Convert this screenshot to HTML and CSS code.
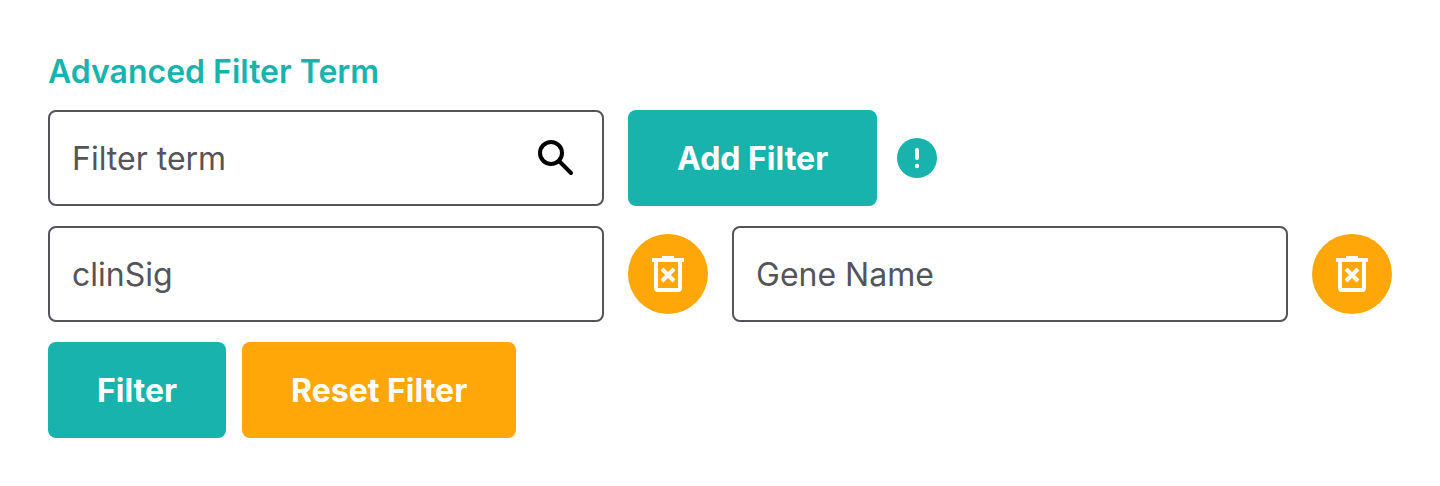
FILE: index.html
```html
<!DOCTYPE html>
<html lang="en">
<head>
<meta charset="utf-8">
<title>Advanced Filter Term</title>
<link rel="stylesheet" href="styles.css">
</head>
<body>
<form class="filters">
  <label class="title" for="term">Advanced Filter Term</label>
  <div class="row">
    <div class="field">
      <input class="input" id="term" type="text" placeholder="Filter term">
      <svg class="search" viewBox="0 0 48 48" aria-hidden="true"><circle cx="19" cy="19" r="11"/><path d="M27 27 39 39" stroke-linecap="round"/></svg>
    </div>
    <button class="button" type="button">Add Filter</button>
    <svg class="info" viewBox="0 0 40 40" role="img" aria-label="Information"><circle cx="20" cy="20" r="20" fill="#18b3ac"/><path d="M20 12v8" fill="none" stroke="#fff" stroke-width="4" stroke-linecap="round"/><circle cx="20" cy="28" r="2.2" fill="#fff"/></svg>
  </div>
  <div class="row">
    <div class="field"><input class="input" type="text" placeholder="clinSig" aria-label="clinSig"></div>
    <button class="remove" type="button" aria-label="Remove clinSig"><svg class="trash" viewBox="0 0 40 40" aria-hidden="true"><path d="M4 6h32M14 4h12M8 6v28q0 2 2 2h20q2 0 2-2V6M14 15l12 12M26 15 14 27"/></svg></button>
    <div class="field"><input class="input" type="text" placeholder="Gene Name" aria-label="Gene Name"></div>
    <button class="remove" type="button" aria-label="Remove Gene Name"><svg class="trash" viewBox="0 0 40 40" aria-hidden="true"><path d="M4 6h32M14 4h12M8 6v28q0 2 2 2h20q2 0 2-2V6M14 15l12 12M26 15 14 27"/></svg></button>
  </div>
  <div class="actions">
    <button class="button" type="submit">Filter</button>
    <button class="button reset" type="reset">Reset Filter</button>
  </div>
</form>
</body>
</html>
```
FILE: styles.css
```css
* { box-sizing: border-box; }
body { margin: 0; background: #fff; font-family: Inter, sans-serif; }
.filters { display: flex; flex-direction: column; gap: 20px; padding: 54px 48px 48px; }
.title { align-self: flex-start; color: #18b3ac; font-size: 32px; line-height: 36px; font-weight: 600; }
.row { display: flex; align-items: center; gap: 24px; }
.field { position: relative; width: calc(50% - 116px); }
.input { display: block; width: 100%; height: 96px; padding: 0 22px; border: 2px solid #545459; border-radius: 8px; background: #fff; color: #545459; font: 400 32px/40px Inter, sans-serif; }
.input::placeholder { color: #545459; opacity: 1; }
.search { position: absolute; top: 24px; right: 24px; width: 48px; height: 48px; fill: none; stroke: #000; stroke-width: 4; pointer-events: none; }
.button { height: 96px; padding: 2px 49px 0; border: 0; border-radius: 8px; background: #18b3ac; color: #fff; font: 700 32px/40px Inter, sans-serif; white-space: nowrap; }
.info { flex: none; width: 40px; height: 40px; margin-left: -4px; }
.remove { flex: none; display: flex; align-items: center; justify-content: center; width: 80px; height: 80px; padding: 0; border: 0; border-radius: 50%; background: #ffa708; }
.trash { width: 40px; height: 40px; fill: none; stroke: #fff; stroke-width: 4; }
.actions { display: flex; gap: 16px; }
.reset { background: #ffa708; }
```
